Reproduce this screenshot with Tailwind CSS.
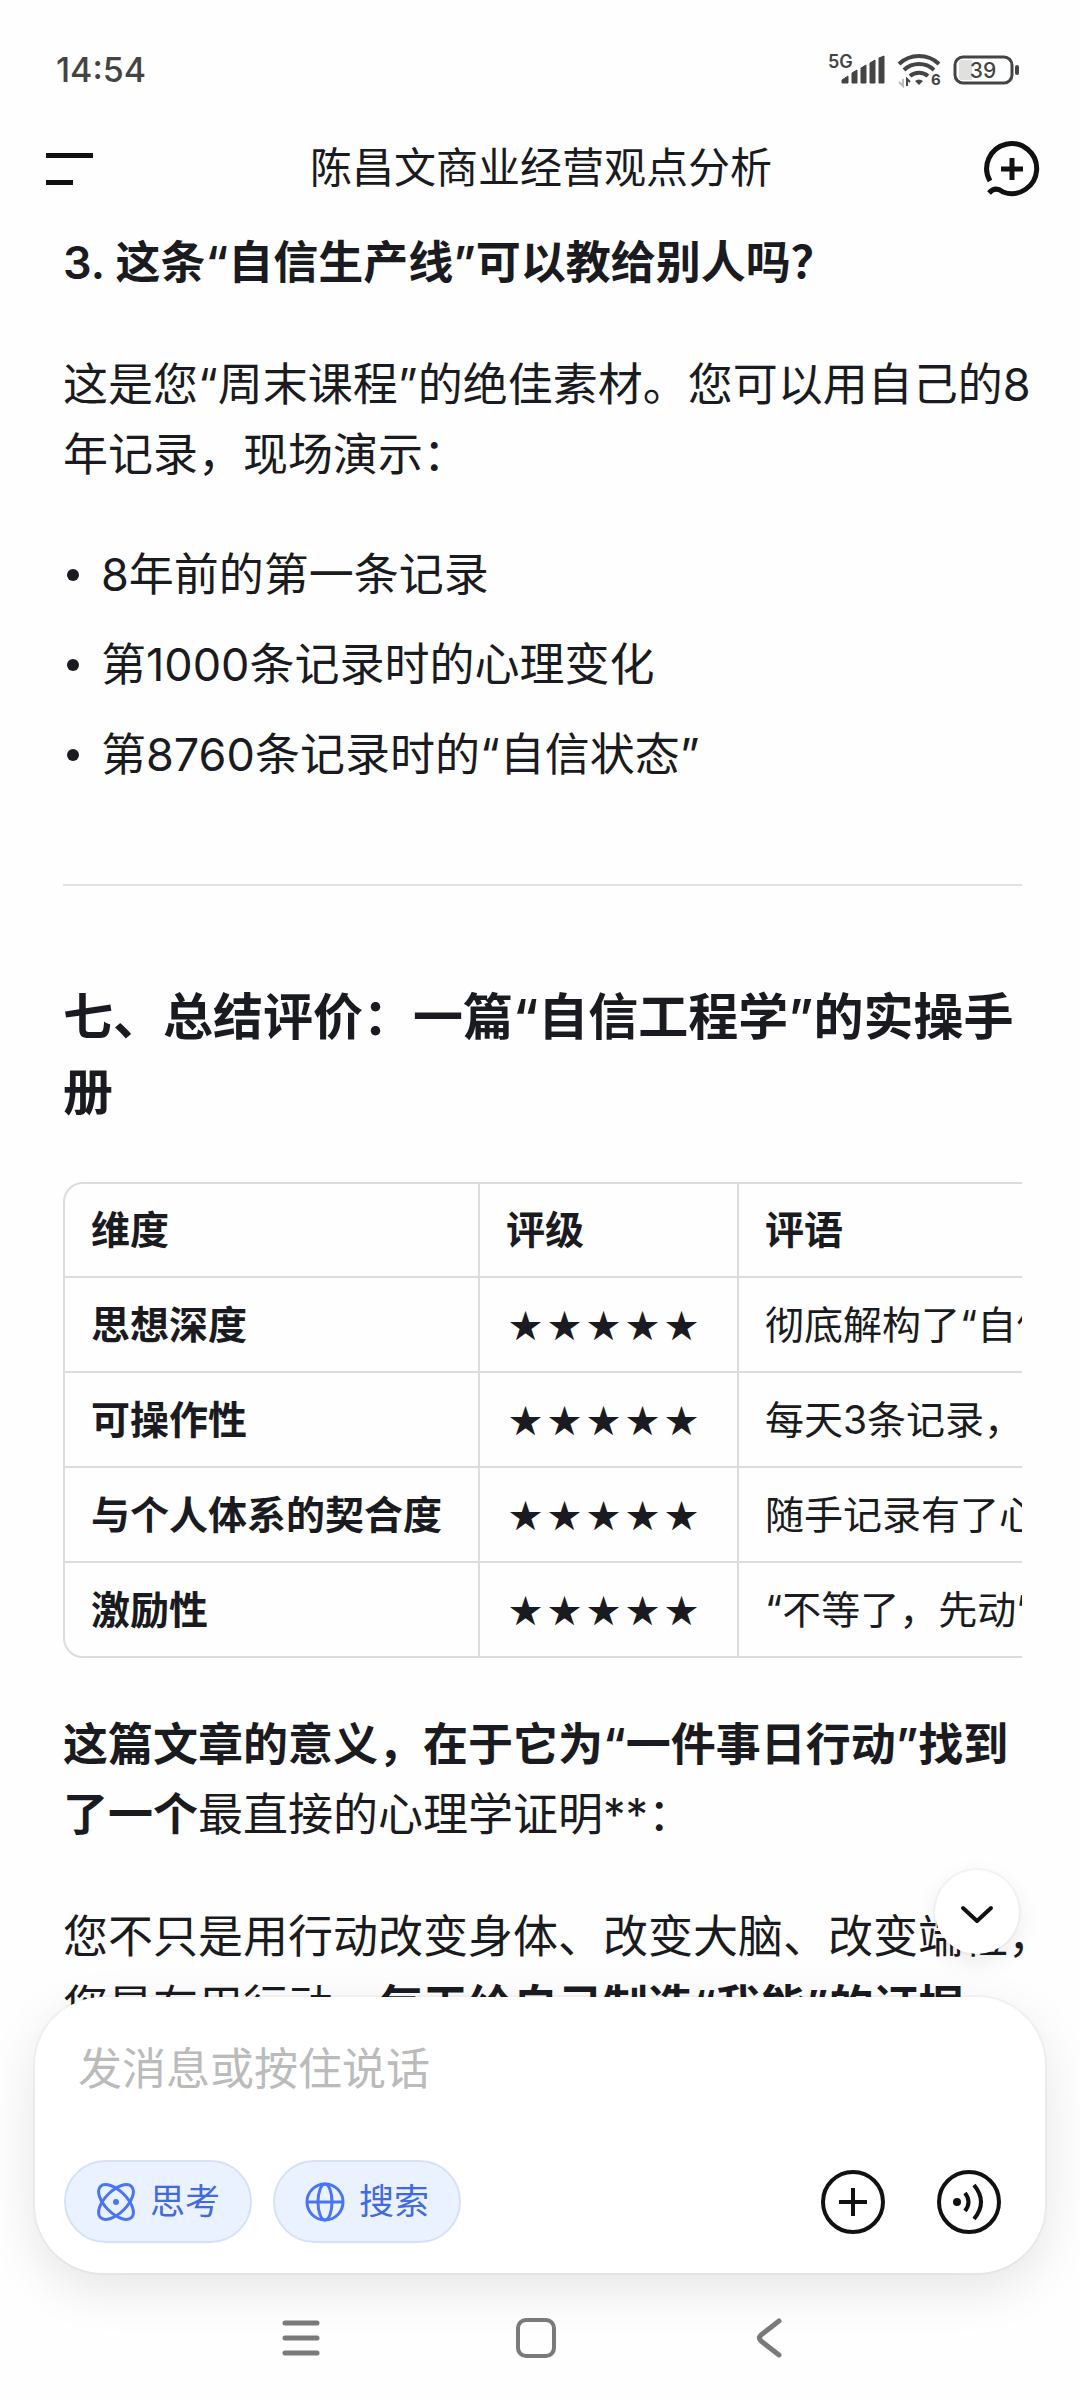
<!DOCTYPE html>
<html lang="zh-CN">
<head>
  <meta charset="UTF-8" />
  <title>陈昌文商业经营观点分析</title>
  <meta name="viewport" content="width=device-width, initial-scale=1" />
  <script src="https://cdn.jsdelivr.net/npm/@tailwindcss/browser@4"></script>
</head>
<body class="h-screen flex flex-col overflow-hidden bg-[#fefefe] text-[#1a1b20] font-['Inter','Noto_Sans_CJK_SC',sans-serif]">

  <!-- Status bar -->
  <div class="h-[140px] shrink-0 flex items-center justify-between pl-14 pr-[60px] text-[#444]">
    <span class="text-[34px] leading-10 font-medium">14:54</span>
    <div class="flex items-center gap-3">
      <svg class="w-[58px] h-11 overflow-visible" viewBox="0 0 58 44" fill="#444">
        <text x="1" y="20" font-size="18" font-weight="600">5G</text>
        <path d="M15 35v-3l6-4v7zM25 35V25l5-3v13zM34 35V20l5-3v18zM43 35V15l5-3v23zM52 35V10l5-2v27z" stroke="#444" stroke-width="1" stroke-linejoin="round" />
      </svg>
      <svg class="w-11 h-9 overflow-visible" viewBox="0 0 44 36" fill="none" stroke="#444" stroke-width="4">
        <path d="M2 12a29 29 0 0 1 40 0M7 18a22 22 0 0 1 30 0M13 24a14 14 0 0 1 18 0" />
        <path d="M18 29q4-3 8 0l-4 4z" fill="#444" stroke="none" />
        <path d="M6 27v7l-4-4" stroke="#bbb" stroke-width="2" />
        <path d="M10 34v-7l3 3" stroke-width="2" />
        <text x="34" y="33" font-size="15" font-weight="700" fill="#444" stroke="#fefefe" stroke-width="3" paint-order="stroke">6</text>
      </svg>
      <svg class="w-[67px] h-9" viewBox="0 0 67 36">
        <path d="M8 8h11v20H8q-2 0-2-3V11q0-3 2-3z" fill="#e0e0e0" />
        <rect x="2" y="5" width="57" height="26" rx="8" fill="none" stroke="#444" stroke-width="3" />
        <rect x="62" y="13" width="4" height="10" rx="2" fill="#444" />
        <text x="30" y="26" text-anchor="middle" font-size="21" font-weight="500" fill="#444">39</text>
      </svg>
    </div>
  </div>

  <!-- Title bar -->
  <header class="h-14 shrink-0 flex items-center justify-between pl-[46px] pr-10">
    <button aria-label="菜单">
      <svg class="w-[54px] h-9" viewBox="0 0 54 36" fill="#111">
        <rect x="0" y="3" width="47" height="5" />
        <rect x="0" y="30" width="27" height="5" />
      </svg>
    </button>
    <h1 class="text-[42px] leading-14">陈昌文商业经营观点分析</h1>
    <button aria-label="新对话">
      <svg class="w-[58px] h-[58px]" viewBox="0 0 58 58" fill="none" stroke="#111" stroke-width="5">
        <path d="M8 42A25 25 0 1 1 21 53Q13 47 7 54" />
        <path d="M30 19v22M19 30h22" />
      </svg>
    </button>
  </header>

  <!-- Answer -->
  <main class="flex-1 min-h-0 overflow-hidden pt-8 pl-[63px] pr-[58px] text-[45px] leading-[70px]">
    <h3 class="font-semibold">3. 这条“自信生产线”可以教给别人吗？</h3>

    <p class="mt-[52px] -mr-5">这是您“周末课程”的绝佳素材。您可以用自己的8年记录，现场演示：</p>

    <ul class="mt-[50px] flex flex-col gap-5">
      <li class="flex items-center gap-[22px]"><span class="size-3 ml-1 rounded-full bg-[#1a1b20]"></span>8年前的第一条记录</li>
      <li class="flex items-center gap-[22px]"><span class="size-3 ml-1 rounded-full bg-[#1a1b20]"></span>第1000条记录时的心理变化</li>
      <li class="flex items-center gap-[22px]"><span class="size-3 ml-1 rounded-full bg-[#1a1b20]"></span>第8760条记录时的“自信状态”</li>
    </ul>

    <hr class="mt-[94px] border-t-2 border-[#e2e2e2]" />

    <h2 class="mt-[94px] text-[50px] leading-[75px] font-semibold">七、总结评价：一篇“自信工程学”的实操手册</h2>

    <div class="mt-[52px] overflow-hidden">
      <table class="w-max border-separate border-spacing-0 rounded-[20px] border-2 border-[#dcdcdc] text-[39px] text-left whitespace-nowrap">
        <thead class="leading-[92px]">
          <tr>
            <th class="pl-[26px] pr-9 border-r-2 border-b-2 border-[#dcdcdc] font-semibold">维度</th>
            <th class="pl-[26px] pr-9 border-r-2 border-b-2 border-[#dcdcdc] font-semibold">评级</th>
            <th class="pl-[26px] pr-9 border-b-2 border-[#dcdcdc] font-semibold">评语</th>
          </tr>
        </thead>
        <tbody class="leading-[93px]">
          <tr>
            <th class="pl-[26px] pr-9 border-r-2 border-b-2 border-[#dcdcdc] font-semibold">思想深度</th>
            <td class="pl-[26px] pr-9 border-r-2 border-b-2 border-[#dcdcdc]">
              <div class="flex text-[33px] text-center font-['Noto_Sans_CJK_SC',sans-serif]"><span class="w-[39px]">★</span><span class="w-[39px]">★</span><span class="w-[39px]">★</span><span class="w-[39px]">★</span><span class="w-[39px]">★</span></div>
            </td>
            <td class="pl-[26px] pr-9 border-b-2 border-[#dcdcdc]">彻底解构了“自信”</td>
          </tr>
          <tr>
            <th class="pl-[26px] pr-9 border-r-2 border-b-2 border-[#dcdcdc] font-semibold">可操作性</th>
            <td class="pl-[26px] pr-9 border-r-2 border-b-2 border-[#dcdcdc]">
              <div class="flex text-[33px] text-center font-['Noto_Sans_CJK_SC',sans-serif]"><span class="w-[39px]">★</span><span class="w-[39px]">★</span><span class="w-[39px]">★</span><span class="w-[39px]">★</span><span class="w-[39px]">★</span></div>
            </td>
            <td class="pl-[26px] pr-9 border-b-2 border-[#dcdcdc]">每天3条记录，</td>
          </tr>
          <tr>
            <th class="pl-[26px] pr-9 border-r-2 border-b-2 border-[#dcdcdc] font-semibold">与个人体系的契合度</th>
            <td class="pl-[26px] pr-9 border-r-2 border-b-2 border-[#dcdcdc]">
              <div class="flex text-[33px] text-center font-['Noto_Sans_CJK_SC',sans-serif]"><span class="w-[39px]">★</span><span class="w-[39px]">★</span><span class="w-[39px]">★</span><span class="w-[39px]">★</span><span class="w-[39px]">★</span></div>
            </td>
            <td class="pl-[26px] pr-9 border-b-2 border-[#dcdcdc]">随手记录有了心</td>
          </tr>
          <tr>
            <th class="pl-[26px] pr-9 border-r-2 border-[#dcdcdc] font-semibold">激励性</th>
            <td class="pl-[26px] pr-9 border-r-2 border-[#dcdcdc]">
              <div class="flex text-[33px] text-center font-['Noto_Sans_CJK_SC',sans-serif]"><span class="w-[39px]">★</span><span class="w-[39px]">★</span><span class="w-[39px]">★</span><span class="w-[39px]">★</span><span class="w-[39px]">★</span></div>
            </td>
            <td class="pl-[26px] pr-9">“不等了，先动”</td>
          </tr>
        </tbody>
      </table>
    </div>

    <p class="mt-[52px]"><strong class="font-semibold">这篇文章的意义，在于它为“一件事日行动”找到了一个</strong>最直接的心理学证明**：</p>

    <p class="mt-[52px] -mr-10">您不只是用行动改变身体、改变大脑、改变端粒，您是在用行动，<strong class="font-semibold">每天给自己制造“我能”的证据</strong></p>
  </main>

  <!-- Composer -->
  <form class="relative shrink-0 -mt-2 mx-[35px] rounded-[68px] bg-white ring-2 ring-black/3 shadow-[0_16px_50px_rgba(0,0,0,0.1)] pt-[42px] pb-[30px] pl-[29px] pr-11">
    <button type="button" aria-label="滚动到底部" class="absolute bottom-full right-[26px] mb-[43px] size-[84px] rounded-full bg-white ring-2 ring-black/3 shadow-[0_8px_24px_rgba(0,0,0,0.08)] flex items-center justify-center">
      <svg class="w-9 h-9 mt-2" viewBox="0 0 36 36" fill="none" stroke="#111" stroke-width="4" stroke-linecap="round" stroke-linejoin="round">
        <path d="M4 10l14 13 14-13" />
      </svg>
    </button>

    <input type="text" aria-label="发消息或按住说话" placeholder="发消息或按住说话" class="block w-full h-[60px] px-3.5 text-[44px] placeholder:text-[#bbb] outline-none" />

    <div class="mt-[61px] flex items-center gap-[21px]">
      <button type="button" class="h-[83px] px-[30px] flex items-center gap-3.5 rounded-full border-2 border-[#d5e1f8] bg-[#ebf2ff] text-[#4169e1] text-[35px]">
        <svg class="size-10" viewBox="0 0 40 40" fill="none" stroke="#4a74f5" stroke-width="3">
          <ellipse cx="20" cy="20" rx="22" ry="11" transform="rotate(45 20 20)" />
          <ellipse cx="20" cy="20" rx="22" ry="11" transform="rotate(-45 20 20)" />
          <circle cx="20" cy="20" r="3" fill="#4a74f5" stroke="none" />
        </svg>
        思考
      </button>
      <button type="button" class="h-[83px] px-[30px] flex items-center gap-3.5 rounded-full border-2 border-[#d5e1f8] bg-[#ebf2ff] text-[#4169e1] text-[35px]">
        <svg class="size-10" viewBox="0 0 40 40" fill="none" stroke="#4a74f5" stroke-width="3">
          <circle cx="20" cy="20" r="18" />
          <ellipse cx="20" cy="20" rx="7" ry="18" />
          <path d="M2 20h36" />
        </svg>
        搜索
      </button>
      <button type="button" aria-label="添加" class="ml-auto mr-[31px]">
        <svg class="size-16" viewBox="0 0 64 64" fill="none" stroke="#111" stroke-width="4">
          <circle cx="32" cy="32" r="30" />
          <path d="M32 18v28M18 32h28" />
        </svg>
      </button>
      <button type="button" aria-label="语音">
        <svg class="size-16" viewBox="0 0 64 64" fill="none" stroke="#111" stroke-width="4">
          <circle cx="32" cy="32" r="30" />
          <circle cx="20" cy="32" r="4" fill="#111" stroke="none" />
          <path d="M28 23q7 9 0 18M37 15q14 17 0 34" />
        </svg>
      </button>
    </div>
  </form>

  <!-- System navigation -->
  <nav class="relative h-[127px] shrink-0 flex items-center justify-center gap-[194px] pr-2 pt-0.5">
    <button aria-label="最近任务">
      <svg class="size-10" viewBox="0 0 40 40" fill="none" stroke="#7a7a7a" stroke-width="5" stroke-linecap="round">
        <path d="M3 5h32M3 20h32M3 35h32" />
      </svg>
    </button>
    <button aria-label="主屏幕">
      <svg class="size-10" viewBox="0 0 40 40" fill="none" stroke="#7a7a7a" stroke-width="4">
        <rect x="2" y="2" width="36" height="36" rx="8" />
      </svg>
    </button>
    <button aria-label="返回">
      <svg class="size-10" viewBox="0 0 40 40" fill="none" stroke="#7a7a7a" stroke-width="5" stroke-linecap="round" stroke-linejoin="round">
        <path d="M29 3L11 17q-3 3 0 6l18 14" />
      </svg>
    </button>
  </nav>
</body>
</html>
